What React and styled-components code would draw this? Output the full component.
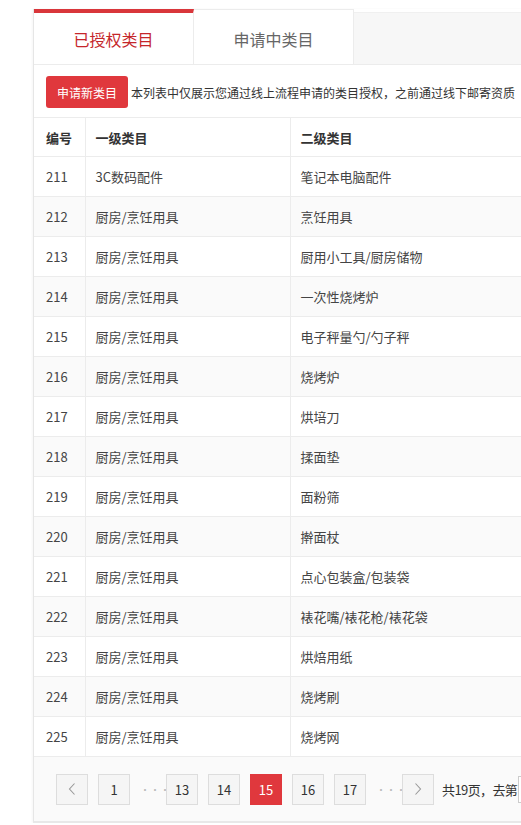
import React from 'react';
import styled, { createGlobalStyle } from 'styled-components';

const rows = [
  ['211', '3C数码配件', '笔记本电脑配件'],
  ['212', '厨房/烹饪用具', '烹饪用具'],
  ['213', '厨房/烹饪用具', '厨用小工具/厨房储物'],
  ['214', '厨房/烹饪用具', '一次性烧烤炉'],
  ['215', '厨房/烹饪用具', '电子秤量勺/勺子秤'],
  ['216', '厨房/烹饪用具', '烧烤炉'],
  ['217', '厨房/烹饪用具', '烘培刀'],
  ['218', '厨房/烹饪用具', '揉面垫'],
  ['219', '厨房/烹饪用具', '面粉筛'],
  ['220', '厨房/烹饪用具', '擀面杖'],
  ['221', '厨房/烹饪用具', '点心包装盒/包装袋'],
  ['222', '厨房/烹饪用具', '裱花嘴/裱花枪/裱花袋'],
  ['223', '厨房/烹饪用具', '烘焙用纸'],
  ['224', '厨房/烹饪用具', '烧烤刷'],
  ['225', '厨房/烹饪用具', '烧烤网'],
];

const pages = ['1', '…', '13', '14', '15', '16', '17', '…'];

function App() {
  return (
    <>
      <GlobalStyle />
      <Page>
        <Panel>
          <Tabs>
            <Tab $active>已授权类目</Tab>
            <Tab>申请中类目</Tab>
            <TabRest />
          </Tabs>
          <Body>
            <Toolbar>
              <RedButton>申请新类目</RedButton>
              <Note>本列表中仅展示您通过线上流程申请的类目授权，之前通过线下邮寄资质</Note>
            </Toolbar>
            <Table>
              <colgroup>
                <col style={{ width: 51 }} />
                <col style={{ width: 205 }} />
                <col />
              </colgroup>
              <thead>
                <tr>
                  <Th $first>编号</Th>
                  <Th>一级类目</Th>
                  <Th>二级类目</Th>
                </tr>
              </thead>
              <tbody>
                {rows.map((r, i) => (
                  <Tr key={r[0]} $odd={i % 2 === 1}>
                    <Td $first>{r[0]}</Td>
                    <Td>{r[1]}</Td>
                    <Td>{r[2]}</Td>
                  </Tr>
                ))}
              </tbody>
            </Table>
            <Pager>
              <PageBtn>
                <svg width="10" height="14" viewBox="0 0 10 14">
                  <path d="M7.5 1.5 L2.5 7 L7.5 12.5" fill="none" stroke="#999" strokeWidth="1.1" />
                </svg>
              </PageBtn>
              {pages.map((p, i) =>
                p === '…' ? (
                  <Dots key={i}>···</Dots>
                ) : (
                  <PageBtn key={i} $current={p === '15'}>{p}</PageBtn>
                )
              )}
              <PageBtn>
                <svg width="10" height="14" viewBox="0 0 10 14">
                  <path d="M2.5 1.5 L7.5 7 L2.5 12.5" fill="none" stroke="#999" strokeWidth="1.1" />
                </svg>
              </PageBtn>
              <Total>共19页，去第</Total>
              <GoInput defaultValue="15" />
            </Pager>
          </Body>
        </Panel>
      </Page>
    </>
  );
}

const GlobalStyle = createGlobalStyle`
  body {
    margin: 0;
    background: #fff;
    overflow: hidden;
    font-family: "Noto Sans CJK SC", "Liberation Sans", sans-serif;
    color: #333;
  }
`;

const Page = styled.div`
  width: 560px;
  padding: 9px 0 0 33px;
`;

const Panel = styled.div`
  width: 527px;
  border-left: 1px solid #e6e6e6;
  border-bottom: 2px solid #e8e8e8;
  box-shadow: -1px 0 2px rgba(0, 0, 0, 0.04);
`;

const Tabs = styled.div`
  display: flex;
  height: 55px;
  border-bottom: 1px solid #ececec;
`;

const Tab = styled.div`
  width: 160px;
  display: flex;
  align-items: center;
  justify-content: center;
  font-size: 16px;
  background: #fff;
  box-sizing: border-box;
  padding-top: ${p => (p.$active ? '0' : '3px')};
  color: ${p => (p.$active ? '#c5262b' : '#666')};
  border-top: ${p => (p.$active ? '4px solid #d9363b' : '1px solid #ececec')};
  border-right: 1px solid #ececec;
`;

const TabRest = styled.div`
  flex: 1;
  margin-top: 3px;
  background: #f7f7f7;
  border-top: 1px solid #f0f0f0;
`;

const Body = styled.div`
  background: #fff;
`;

const Toolbar = styled.div`
  display: flex;
  align-items: center;
  gap: 3px;
  height: 53px;
  padding: 2px 0 0 12px;
  box-sizing: border-box;
  white-space: nowrap;
  overflow: hidden;
  border-bottom: 1px solid #ececec;
`;

const RedButton = styled.button`
  flex: none;
  height: 32px;
  width: 82px;
  border: 0;
  border-radius: 3px;
  background: #e0383d;
  color: #fff;
  font-family: inherit;
  font-size: 12px;
  padding: 0;
`;

const Note = styled.span`
  font-size: 12px;
  color: #333;
`;

const Table = styled.table`
  width: 100%;
  border-collapse: collapse;
  table-layout: fixed;
  font-size: 13px;
`;

const Th = styled.th`
  height: 38px;
  text-align: left;
  font-weight: bold;
  color: #333;
  padding: 0 0 0 ${p => (p.$first ? '12px' : '10px')};
  border-bottom: 1px solid #ececec;
  border-right: 1px solid #ececec;
`;

const Tr = styled.tr`
  background: ${p => (p.$odd ? '#fafafa' : '#fff')};
`;

const Td = styled.td`
  height: 39px;
  color: #444;
  padding: 0 0 0 ${p => (p.$first ? '12px' : '10px')};
  border-bottom: 1px solid #ececec;
  border-right: 1px solid #ececec;
  white-space: nowrap;
`;

const Pager = styled.div`
  display: flex;
  align-items: center;
  gap: 10px;
  height: 64px;
  padding: 0 0 0 22px;
  background: #fafafa;
  white-space: nowrap;
`;

const PageBtn = styled.div`
  flex: none;
  width: 32px;
  height: 31px;
  box-sizing: border-box;
  display: flex;
  align-items: center;
  justify-content: center;
  font-size: 13px;
  border: 1px solid ${p => (p.$current ? '#e0383d' : '#ddd')};
  background: ${p => (p.$current ? '#e0383d' : '#f5f5f5')};
  color: ${p => (p.$current ? '#fff' : '#333')};
`;

const Dots = styled.span`
  flex: none;
  width: 16px;
  text-align: center;
  color: #bbb;
  font-size: 10px;
`;

const Total = styled.span`
  flex: none;
  font-size: 13px;
  letter-spacing: -0.6px;
  color: #333;
  margin-left: -2px;
`;

const GoInput = styled.input`
  flex: none;
  width: 36px;
  height: 27px;
  box-sizing: border-box;
  border: 1px solid #ccc;
  margin-left: -9px;
  font-size: 13px;
  padding: 0 4px;
`;

export default App;
